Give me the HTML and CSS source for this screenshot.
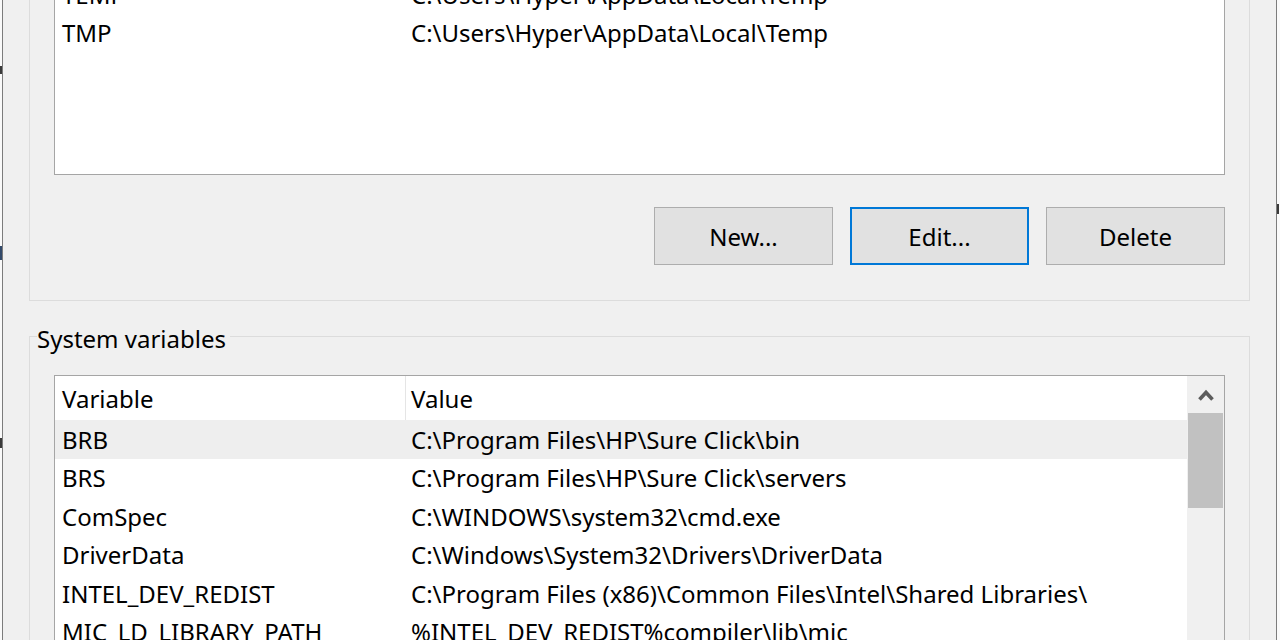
FILE: index.html
```html
<!DOCTYPE html>
<html lang="en">
<head>
    <meta charset="UTF-8">
    <meta name="viewport" content="width=device-width, initial-scale=1.0">
    <title>Environment Variables</title>
    <link rel="stylesheet" href="styles.css">
</head>
<body>
    <div class="screen">
        <div class="edge edge-left">
            <span class="mark mark-a"></span>
            <span class="mark mark-b"></span>
            <span class="mark mark-c"></span>
        </div>

        <div class="window">
            <!-- User variables (top of the box is scrolled off) -->
            <div class="group group-user">
                <div class="list list-user">
                    <div class="row">
                        <span class="cell cell-name">TEMP</span>
                        <span class="cell cell-value">C:\Users\Hyper\AppData\Local\Temp</span>
                    </div>
                    <div class="row">
                        <span class="cell cell-name">TMP</span>
                        <span class="cell cell-value">C:\Users\Hyper\AppData\Local\Temp</span>
                    </div>
                </div>
                <div class="buttons">
                    <button type="button" class="btn">New...</button>
                    <button type="button" class="btn btn-focus">Edit...</button>
                    <button type="button" class="btn">Delete</button>
                </div>
            </div>

            <fieldset class="group group-system">
                <legend>System variables</legend>
                <div class="list list-system">
                    <div class="list-main">
                        <div class="row row-head">
                            <span class="cell cell-name">Variable</span>
                            <span class="cell cell-value">Value</span>
                        </div>
                        <div class="row row-hover">
                            <span class="cell cell-name">BRB</span>
                            <span class="cell cell-value">C:\Program Files\HP\Sure Click\bin</span>
                        </div>
                        <div class="row">
                            <span class="cell cell-name">BRS</span>
                            <span class="cell cell-value">C:\Program Files\HP\Sure Click\servers</span>
                        </div>
                        <div class="row">
                            <span class="cell cell-name">ComSpec</span>
                            <span class="cell cell-value">C:\WINDOWS\system32\cmd.exe</span>
                        </div>
                        <div class="row">
                            <span class="cell cell-name">DriverData</span>
                            <span class="cell cell-value">C:\Windows\System32\Drivers\DriverData</span>
                        </div>
                        <div class="row">
                            <span class="cell cell-name">INTEL_DEV_REDIST</span>
                            <span class="cell cell-value">C:\Program Files (x86)\Common Files\Intel\Shared Libraries\</span>
                        </div>
                        <div class="row">
                            <span class="cell cell-name">MIC_LD_LIBRARY_PATH</span>
                            <span class="cell cell-value">%INTEL_DEV_REDIST%compiler\lib\mic</span>
                        </div>
                        <div class="row">
                            <span class="cell cell-name">NUMBER_OF_PROCESSORS</span>
                            <span class="cell cell-value">8</span>
                        </div>
                    </div>
                    <div class="scrollbar">
                        <div class="scroll-up">
                            <svg width="18" height="14" viewBox="0 0 18 14">
                                <path d="M2.5 11.5 L9 4.5 L15.5 11.5" fill="none" stroke="#5c5c5c" stroke-width="3.6"/>
                            </svg>
                        </div>
                        <div class="scroll-thumb"></div>
                    </div>
                </div>
            </fieldset>
        </div>

        <div class="edge edge-right">
            <span class="mark mark-d"></span>
        </div>
    </div>
</body>
</html>
```

FILE: styles.css
```css
body {
    margin: 0;
    background-color: #fafafa;
    font-family: "Noto Sans", "Open Sans", sans-serif;
    font-size: 24px;
    color: #000;
    overflow: hidden;
}
.screen {
    display: flex;
    height: 640px;
    overflow: hidden;
}
.edge {
    display: flex;
    flex-direction: column;
}
.edge-left {
    width: 2px;
}
.edge-right {
    width: 3px;
}
.mark {
    display: block;
    width: 2px;
    background-color: #3a3a3a;
}
.mark-a {
    height: 8px;
    margin-top: 66px;
}
.mark-b {
    height: 14px;
    margin-top: 172px;
    background-color: #334a6a;
}
.mark-c {
    height: 10px;
    margin-top: 178px;
}
.mark-d {
    height: 10px;
    margin-top: 204px;
}

.window {
    flex: 1;
    background-color: #f0f0f0;
    border-left: 1px solid #7c7c7c;
    border-right: 1px solid #7c7c7c;
    padding: 0 26px;
}

.group {
    border: 1px solid #dcdcdc;
}
.group-user {
    border-top: none;
    margin-top: -40px;
    padding: 0 24px 35px 24px;
}
.list {
    border: 1px solid #a5a5a5;
    background-color: #fff;
}
.list-user {
    box-sizing: border-box;
    height: 215px;
    padding-top: 14px;
}
.row {
    display: flex;
    height: 38.5px;
    align-items: center;
    white-space: nowrap;
}
.cell-name {
    box-sizing: border-box;
    width: 351px;
    padding-left: 7px;
}
.cell-value {
    padding-left: 5px;
}

.buttons {
    display: flex;
    justify-content: flex-end;
    gap: 17px;
    margin-top: 32px;
}
.btn {
    box-sizing: border-box;
    width: 179px;
    height: 58px;
    font-family: inherit;
    font-size: 24px;
    color: #000;
    background-color: #e1e1e1;
    border: 1px solid #adadad;
    padding: 0;
}
.btn-focus {
    border: 2px solid #0078d7;
}

.group-system {
    margin: 14px 0 0 0;
    padding: 0 24px;
    border-bottom: none;
    min-width: 0;
}
.group-system legend {
    margin-left: -17px;
    padding: 6px 4px 0 0;
    line-height: 36px;
}
.list-system {
    display: flex;
    margin-top: 18px;
    height: 300px;
}
.list-main {
    flex: 1;
}
.row-head {
    height: 44px;
}
.row-head .cell-name {
    height: 44px;
    display: flex;
    align-items: center;
    border-right: 1px solid #e5e5e5;
}
.row-hover {
    background-color: #eeeeee;
}
.scrollbar {
    width: 37px;
    background-color: #f0f0f0;
}
.scroll-up {
    height: 37px;
    display: flex;
    align-items: center;
    justify-content: center;
}
.scroll-thumb {
    height: 95px;
    margin: 0 1px;
    background-color: #c1c1c1;
}
```
